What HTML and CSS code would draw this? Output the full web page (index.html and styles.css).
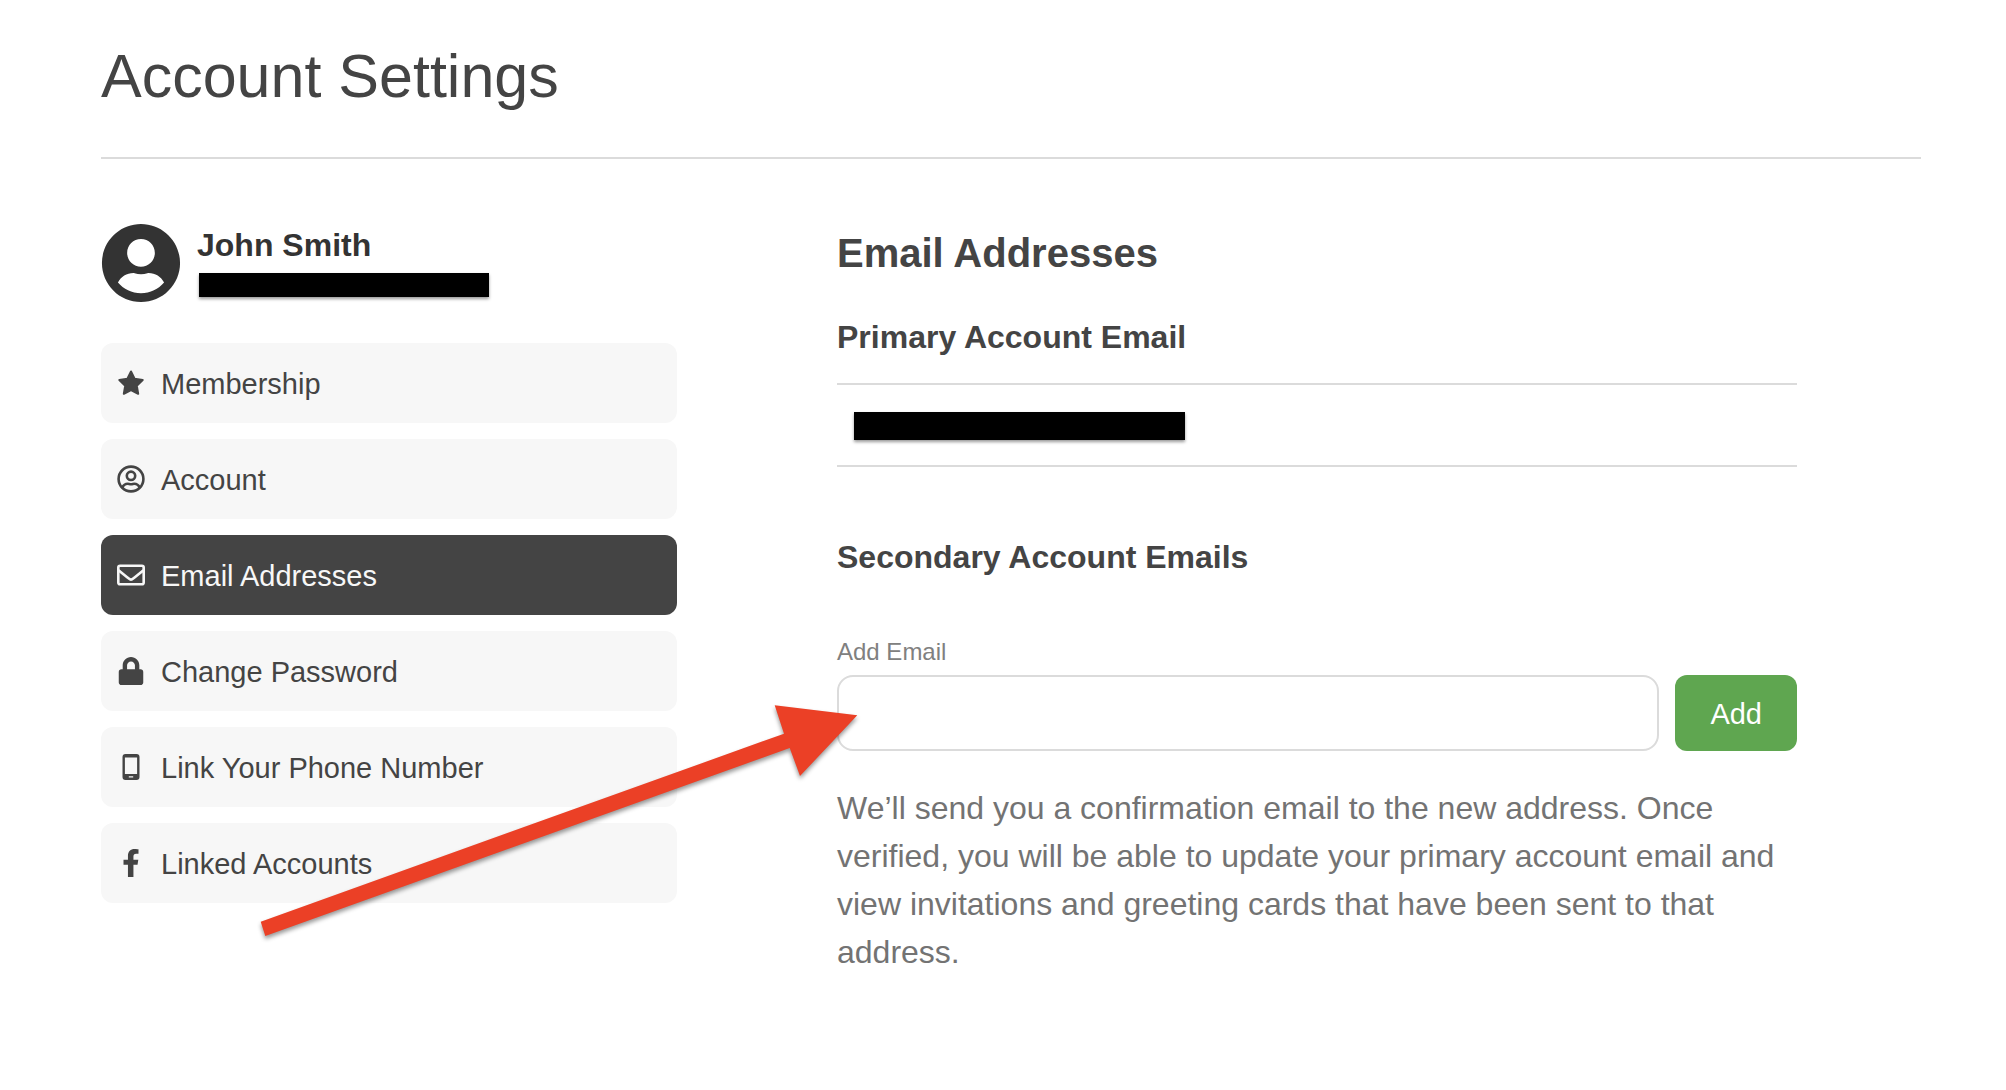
FILE: index.html
```html
<!DOCTYPE html>
<html lang="en">
  <head>
    <meta charset="UTF-8" />
    <meta name="viewport" content="width=device-width, initial-scale=1" />
    <title>Account Settings</title>
    <link rel="stylesheet" href="styles.css">
  </head>
  <body>
    <header class="page-header">
      <h1>Account Settings</h1>
    </header>

    <main class="settings">
      <aside>
        <div class="profile">
          <svg class="avatar" viewBox="-6 2 508 508" aria-hidden="true">
            <path d="M248 8C111 8 0 119 0 256s111 248 248 248 248-111 248-248S385 8 248 8zm0 96c48.600 0 88 39.400 88 88s-39.400 88-88 88-88-39.400-88-88 39.400-88 88-88zm0 344c-58.700 0-111.300-26.600-146.500-68.200 18.800-35.400 55.600-59.800 98.500-59.800 2.400 0 4.800.4 7.100 1.100 13 4.200 26.600 6.900 40.900 6.900 14.300 0 28-2.700 40.900-6.900 2.300-.7 4.700-1.100 7.100-1.100 42.900 0 79.700 24.400 98.500 59.800C359.300 421.400 306.700 448 248 448z" />
          </svg>
          <div class="profile-info">
            <p class="name">John Smith</p>
            <div class="redacted redacted-small"></div>
          </div>
        </div>

        <nav class="menu">
          <a href="#membership">
            <svg viewBox="0 0 28 28" aria-hidden="true">
              <path d="M14 2.500l3.600 7.300 8.100 1.200-5.900 5.700 1.400 8.100L14 21l-7.200 3.800 1.400-8.100L2.300 11l8.100-1.200z" stroke="currentColor" stroke-width="2" stroke-linejoin="round" />
            </svg>
            Membership
          </a>
          <a href="#account">
            <svg class="outline" viewBox="0 0 28 28" aria-hidden="true">
              <circle cx="14" cy="14" r="12.400" />
              <circle cx="14" cy="10.800" r="4.200" />
              <path d="M5.300 22.600c1.200-2.600 3-3.800 5.400-3.800 1.200 0 1.800.5 3.300.5s2.100-.5 3.300-.5c2.400 0 4.200 1.200 5.400 3.800" />
            </svg>
            Account
          </a>
          <a href="#email" class="active" aria-current="page">
            <svg class="outline" viewBox="0 0 28 28" aria-hidden="true">
              <rect x="1.300" y="4.800" width="25.400" height="18.500" rx="1.800" />
              <path d="M1.500 9.200c3 2.500 6.200 5 9.300 7.500 1.500 1.200 2.300 1.900 3.200 1.900s1.700-.7 3.200-1.900c3.100-2.500 6.300-5 9.300-7.500" />
            </svg>
            Email Addresses
          </a>
          <a href="#password">
            <svg viewBox="-32 0 512 512" aria-hidden="true">
              <path d="M400 224h-24v-72C376 68.200 307.800 0 224 0S72 68.200 72 152v72H48c-26.500 0-48 21.500-48 48v192c0 26.500 21.500 48 48 48h352c26.500 0 48-21.500 48-48V272c0-26.500-21.500-48-48-48zm-104 0H152v-72c0-39.700 32.300-72 72-72s72 32.300 72 72v72z" />
            </svg>
            Change Password
          </a>
          <a href="#phone">
            <svg viewBox="0 0 28 28" aria-hidden="true">
              <path fill-rule="evenodd" d="M8.500 1h11a3 3 0 0 1 3 3v20a3 3 0 0 1-3 3h-11a3 3 0 0 1-3-3V4a3 3 0 0 1 3-3zM7.900 4.400v16.500h12.200V4.400zM11.800 23.200v1.400h4.400v-1.400z" />
            </svg>
            Link Your Phone Number
          </a>
          <a href="#linked">
            <svg viewBox="-96 0 512 512" aria-hidden="true">
              <path d="M279.140 288l14.220-92.660h-88.910v-60.130c0-25.350 12.420-50.060 52.240-50.060h40.420V6.260S260.430 0 225.360 0c-73.220 0-121.080 44.380-121.080 124.720v70.620H22.890V288h81.390v224h100.170V288z" />
            </svg>
            Linked Accounts
          </a>
        </nav>
      </aside>

      <section class="emails">
        <h2>Email Addresses</h2>

        <h3>Primary Account Email</h3>
        <div class="primary-email">
          <div class="redacted"></div>
        </div>

        <h3>Secondary Account Emails</h3>
        <form>
          <label for="email">Add Email</label>
          <div class="field">
            <input type="email" id="email" />
            <button type="submit">Add</button>
          </div>
          <p class="help">
            We’ll send you a confirmation email to the new address. Once
            verified, you will be able to update your primary account email and
            view invitations and greeting cards that have been sent to that
            address.
          </p>
        </form>
      </section>
    </main>

    <svg class="arrow" width="620" height="250" viewBox="250 700 620 250" aria-hidden="true">
      <polygon points="260.700,921.700 784,733.700 774.700,705.300 857.300,715.300 800,776 789.700,748 265.300,936" />
    </svg>
  </body>
</html>
```
FILE: styles.css
```css
* {
  box-sizing: border-box;
}

body {
  position: relative;
  margin: 0;
  padding: 40px 85px 40px 101px;
  font-family: "Helvetica Neue", "Liberation Sans", Arial, sans-serif;
  color: #444;
  background-color: white;
}

h1,
h2,
h3,
p {
  margin: 0;
}

.page-header {
  padding-bottom: 45px;
  border-bottom: 2px solid #dbdbdb;
}

h1 {
  font-size: 61px;
  line-height: 72px;
  font-weight: 400;
}

h2 {
  font-size: 40px;
  line-height: 48px;
}

h3 {
  font-size: 32px;
  line-height: 40px;
}

.settings {
  display: grid;
  grid-template-columns: 3fr 5fr;
  gap: 160px;
  padding-right: 124px;
  margin-top: 64px;
}

/* sidebar */
.profile {
  display: flex;
  gap: 16px;
  margin-bottom: 40px;
}

.avatar {
  width: 80px;
  height: 80px;
  fill: #333;
}

.profile-info {
  padding-top: 2px;
}

.name {
  font-size: 32px;
  line-height: 40px;
  font-weight: 700;
  color: #333;
}

.redacted {
  width: 331px;
  height: 28px;
  background-color: black;
  box-shadow: 0 2px 3px rgba(0, 0, 0, 0.4);
}

.redacted-small {
  width: 290px;
  height: 24px;
  margin: 8px 0 0 2px;
}

.menu {
  display: flex;
  flex-direction: column;
  gap: 16px;
}

.menu a {
  display: flex;
  align-items: center;
  gap: 16px;
  height: 80px;
  padding: 2px 16px 0;
  border-radius: 12px;
  background-color: #f7f7f7;
  color: #444;
  font-size: 29px;
  text-decoration: none;
}

.menu a.active {
  background-color: #444;
  color: #f7f7f7;
}

.menu svg {
  width: 28px;
  height: 28px;
  margin-bottom: 2px;
  fill: currentColor;
}

.menu .outline {
  fill: none;
  stroke: currentColor;
  stroke-width: 2.6;
}

/* email form */
.emails {
  padding-top: 6px;
}

.emails h2 {
  margin-bottom: 40px;
}

.primary-email {
  height: 84px;
  margin: 26px 0 70px;
  padding: 27px 17px;
  border-top: 2px solid #dbdbdb;
  border-bottom: 2px solid #dbdbdb;
}

form {
  margin-top: 59px;
}

label {
  display: block;
  margin-bottom: 7px;
  font-size: 24px;
  line-height: 32px;
  color: #808080;
}

.field {
  display: flex;
  gap: 16px;
}

input {
  flex: 1;
  min-width: 0;
  height: 76px;
  padding: 0 20px;
  border: 2px solid #dbdbdb;
  border-radius: 16px;
  font-family: inherit;
  font-size: 32px;
  background-color: white;
}

button {
  padding: 2px 35px 0;
  border: none;
  border-radius: 12px;
  background-color: #5fa650;
  color: white;
  font-family: inherit;
  font-size: 29px;
  cursor: pointer;
}

.help {
  margin-top: 33px;
  font-size: 32px;
  line-height: 48px;
  color: #737373;
}

.arrow {
  position: absolute;
  top: 700px;
  left: 250px;
  fill: #eb4026;
  filter: drop-shadow(0 3px 2px rgba(0, 0, 0, 0.4));
  pointer-events: none;
}
```
